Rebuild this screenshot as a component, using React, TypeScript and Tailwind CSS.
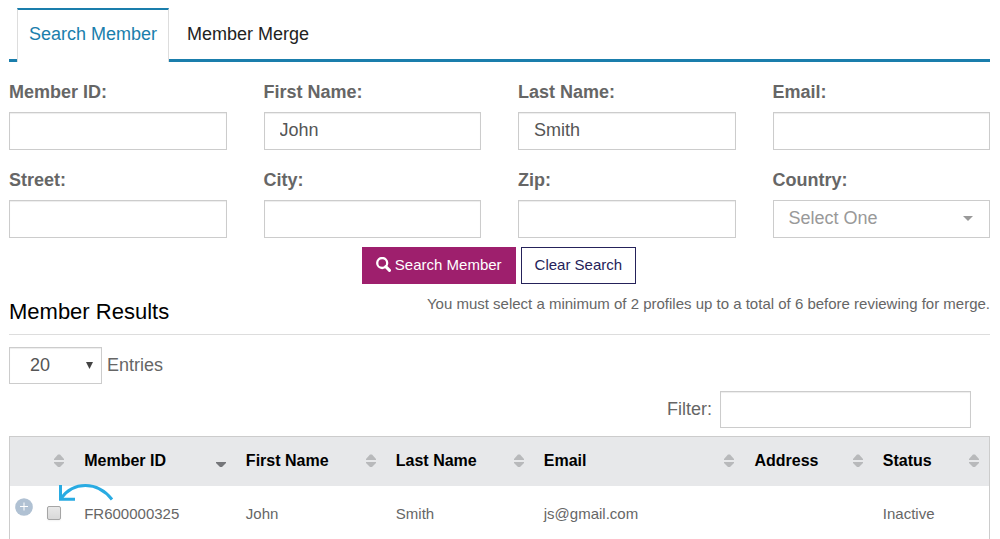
import { useState } from 'react'
import clsx from 'clsx'

interface Field {
  id: string
  label: string
  value?: string
}

interface Column {
  key: string
  label: string
  width: string
  sort?: 'desc'
}

const fields: Field[] = [
  { id: 'memberId', label: 'Member ID:' },
  { id: 'firstName', label: 'First Name:', value: 'John' },
  { id: 'lastName', label: 'Last Name:', value: 'Smith' },
  { id: 'email', label: 'Email:' },
  { id: 'street', label: 'Street:' },
  { id: 'city', label: 'City:' },
  { id: 'zip', label: 'Zip:' },
]

const columns: Column[] = [
  { key: 'id', label: 'Member ID', width: 'w-[16.5%]', sort: 'desc' },
  { key: 'first', label: 'First Name', width: 'w-[15.3%]' },
  { key: 'last', label: 'Last Name', width: 'w-[15.1%]' },
  { key: 'email', label: 'Email', width: 'w-[21.5%]' },
  { key: 'address', label: 'Address', width: 'w-[13.1%]' },
  { key: 'status', label: 'Status', width: 'w-[11.9%]' },
]

const members = [
  { id: 'FR600000325', first: 'John', last: 'Smith', email: 'js@gmail.com', address: '', status: 'Inactive' },
]

const inputClass =
  'w-full rounded-none border border-[#ccc] bg-white px-[15px] pb-0.5 text-lg text-[#555] shadow-[inset_0_1px_1px_rgba(0,0,0,0.075)] outline-none'

function SortIcon({ sort }: { sort?: 'desc' }) {
  return (
    <svg width="10" height="14" viewBox="0 0 10 14" className="shrink-0" aria-hidden="true">
      {sort === 'desc' ? (
        <path d="M0 8h10v1L6 13H4L0 9z" fill="#75767a" />
      ) : (
        <path d="M0 5 4 0.5h2L10 5v1H0zM0 8h10v1L6 13H4L0 9z" fill="#b8b9bb" />
      )}
    </svg>
  )
}

function Tabs() {
  const [active, setActive] = useState('Search Member')

  return (
    <div role="tablist" className="flex border-b-3 border-[#1a7eac] pl-2">
      {['Search Member', 'Member Merge'].map(tab => (
        <button
          key={tab}
          role="tab"
          aria-selected={tab === active}
          onClick={() => setActive(tab)}
          className={clsx(
            '-mb-[3px] h-[54px] border-t-2 pb-1 text-lg',
            tab === active
              ? 'border-x border-x-[#ddd] border-t-[#1a7eac] bg-white px-[11px] text-[#1a7eac]'
              : 'border-transparent px-[18px] text-[#222]'
          )}
        >
          {tab}
        </button>
      ))}
    </div>
  )
}

function SearchForm() {
  return (
    <form onSubmit={e => e.preventDefault()}>
      <div className="grid grid-cols-4 gap-x-[37px] gap-y-4">
        {fields.map(f => (
          <div key={f.id}>
            <label htmlFor={f.id} className="mb-1.5 block text-lg font-bold">{f.label}</label>
            <input id={f.id} type="text" defaultValue={f.value} className={clsx(inputClass, 'h-[38px]')} />
          </div>
        ))}
        <div>
          <label htmlFor="country" className="mb-1.5 block text-lg font-bold">Country:</label>
          <div className="relative">
            <select
              id="country"
              className="h-[38px] w-full appearance-none border border-[#ccc] bg-white px-[15px] pb-0.5 text-lg text-[#999]"
            >
              <option>Select One</option>
            </select>
            <svg width="10" height="5" viewBox="0 0 10 5" className="pointer-events-none absolute top-4 right-[17px]">
              <path d="M0 0h10L5 5z" fill="#999" />
            </svg>
          </div>
        </div>
      </div>
      <div className="mt-[9px] flex justify-center gap-[5px] pr-px text-[15px]">
        <button type="submit" className="flex h-[37px] items-center gap-1 bg-[#9e1f6d] px-[14px] text-white">
          <svg width="15" height="15" viewBox="0 0 15 15" aria-hidden="true" className="-mt-0.5">
            <circle cx="6.2" cy="6" r="5" fill="none" stroke="#fff" strokeWidth="2.3" />
            <path d="m9.8 9.6 3.7 3.8" stroke="#fff" strokeWidth="3" strokeLinecap="round" />
          </svg>
          Search Member
        </button>
        <button type="reset" className="h-[37px] border border-[#25225a] bg-white px-[13px] text-[#25225a]">
          Clear Search
        </button>
      </div>
    </form>
  )
}

function ResultsTable() {
  return (
    <table className="w-full table-fixed border-x border-[#ccc] text-left">
      <thead className="border-t border-[#ccc] bg-[#e7e8ea] text-base text-black">
        <tr className="h-[49px]">
          <th className="w-[6.6%] pr-2.5" aria-label="Select">
            <div className="flex justify-end"><SortIcon /></div>
          </th>
          {columns.map(c => (
            <th key={c.key} className={clsx(c.width, 'px-2.5')}>
              <div className="flex items-center justify-between whitespace-nowrap">
                {c.label}
                <SortIcon sort={c.sort} />
              </div>
            </th>
          ))}
        </tr>
      </thead>
      <tbody className="text-[15px]">
        {members.map(m => (
          <tr key={m.id} className="h-[53px] align-top">
            <td className="relative pt-3">
              <div className="flex items-start gap-[14px] pl-[5px]">
                <button aria-label="Expand row" className="size-[18px]">
                  <svg width="18" height="18" viewBox="0 0 18 18">
                    <circle cx="9" cy="9" r="8.8" fill="#b0c1d3" />
                    <path d="M5 8.5h8M9 4.5v8" stroke="#fff" />
                  </svg>
                </button>
                <input
                  type="checkbox"
                  aria-label={`Select ${m.id}`}
                  className="mt-2 size-[14px] appearance-none rounded-xs border border-[#a5a5a5] bg-linear-to-b from-[#e8e8e8] to-[#d8d8d8] shadow-xs checked:from-[#1a7eac] checked:to-[#1a7eac]"
                />
              </div>
              {/* callout arrow pointing at the checkbox */}
              <svg
                width="58"
                height="20"
                viewBox="0 0 58 20"
                fill="none"
                stroke="#29abe2"
                strokeWidth="3"
                className="pointer-events-none absolute -top-[3px] left-[47px]"
              >
                <path d="M3.5 2v14.2h14.5M4 15.5C16-1.5 40-2.5 55 16.5" />
              </svg>
            </td>
            <td className="px-2.5 pt-[17px]">{m.id}</td>
            <td className="px-2.5 pt-[17px]">{m.first}</td>
            <td className="px-2.5 pt-[17px]">{m.last}</td>
            <td className="px-2.5 pt-[17px]">{m.email}</td>
            <td className="px-2.5 pt-[17px]">{m.address}</td>
            <td className="px-2.5 pt-[17px]">{m.status}</td>
          </tr>
        ))}
      </tbody>
    </table>
  )
}

export default function App() {
  return (
    <main className="bg-white pt-2 pr-2.5 pl-[9px] font-['Liberation_Sans',Arial,sans-serif] text-[#666]">
      <Tabs />
      <div className="mt-4">
        <SearchForm />
      </div>
      <div className="mt-[9px] flex items-start justify-between border-b border-[#ddd] pb-1.5">
        <h2 className="pt-[3px] text-[22px] leading-8 text-black">Member Results</h2>
        <p className="text-[15px]">You must select a minimum of 2 profiles up to a total of 6 before reviewing for merge.</p>
      </div>
      <div className="mt-3 flex items-center gap-[5px] text-lg">
        <div className="relative">
          <select
            id="entries"
            defaultValue="20"
            className="h-[37px] w-[93px] appearance-none border border-[#ccc] bg-white pb-0.5 pl-5 text-lg text-[#555] shadow-[inset_0_1px_1px_rgba(0,0,0,0.075)]"
          >
            <option>20</option>
            <option>50</option>
            <option>100</option>
          </select>
          <svg width="7" height="7" viewBox="0 0 7 7" className="pointer-events-none absolute top-[15px] right-[9px]">
            <path d="M0 0h7L3.5 7z" fill="#444" />
          </svg>
        </div>
        <label htmlFor="entries" className="pb-0.5">Entries</label>
      </div>
      <div className="mt-[7px] mb-2 flex items-center justify-end gap-2 pr-[19px] text-lg">
        <label htmlFor="filter" className="pb-0.5">Filter:</label>
        <div className="w-[251px]">
          <input id="filter" type="text" className={clsx(inputClass, 'h-[37px]')} />
        </div>
      </div>
      <ResultsTable />
    </main>
  )
}
